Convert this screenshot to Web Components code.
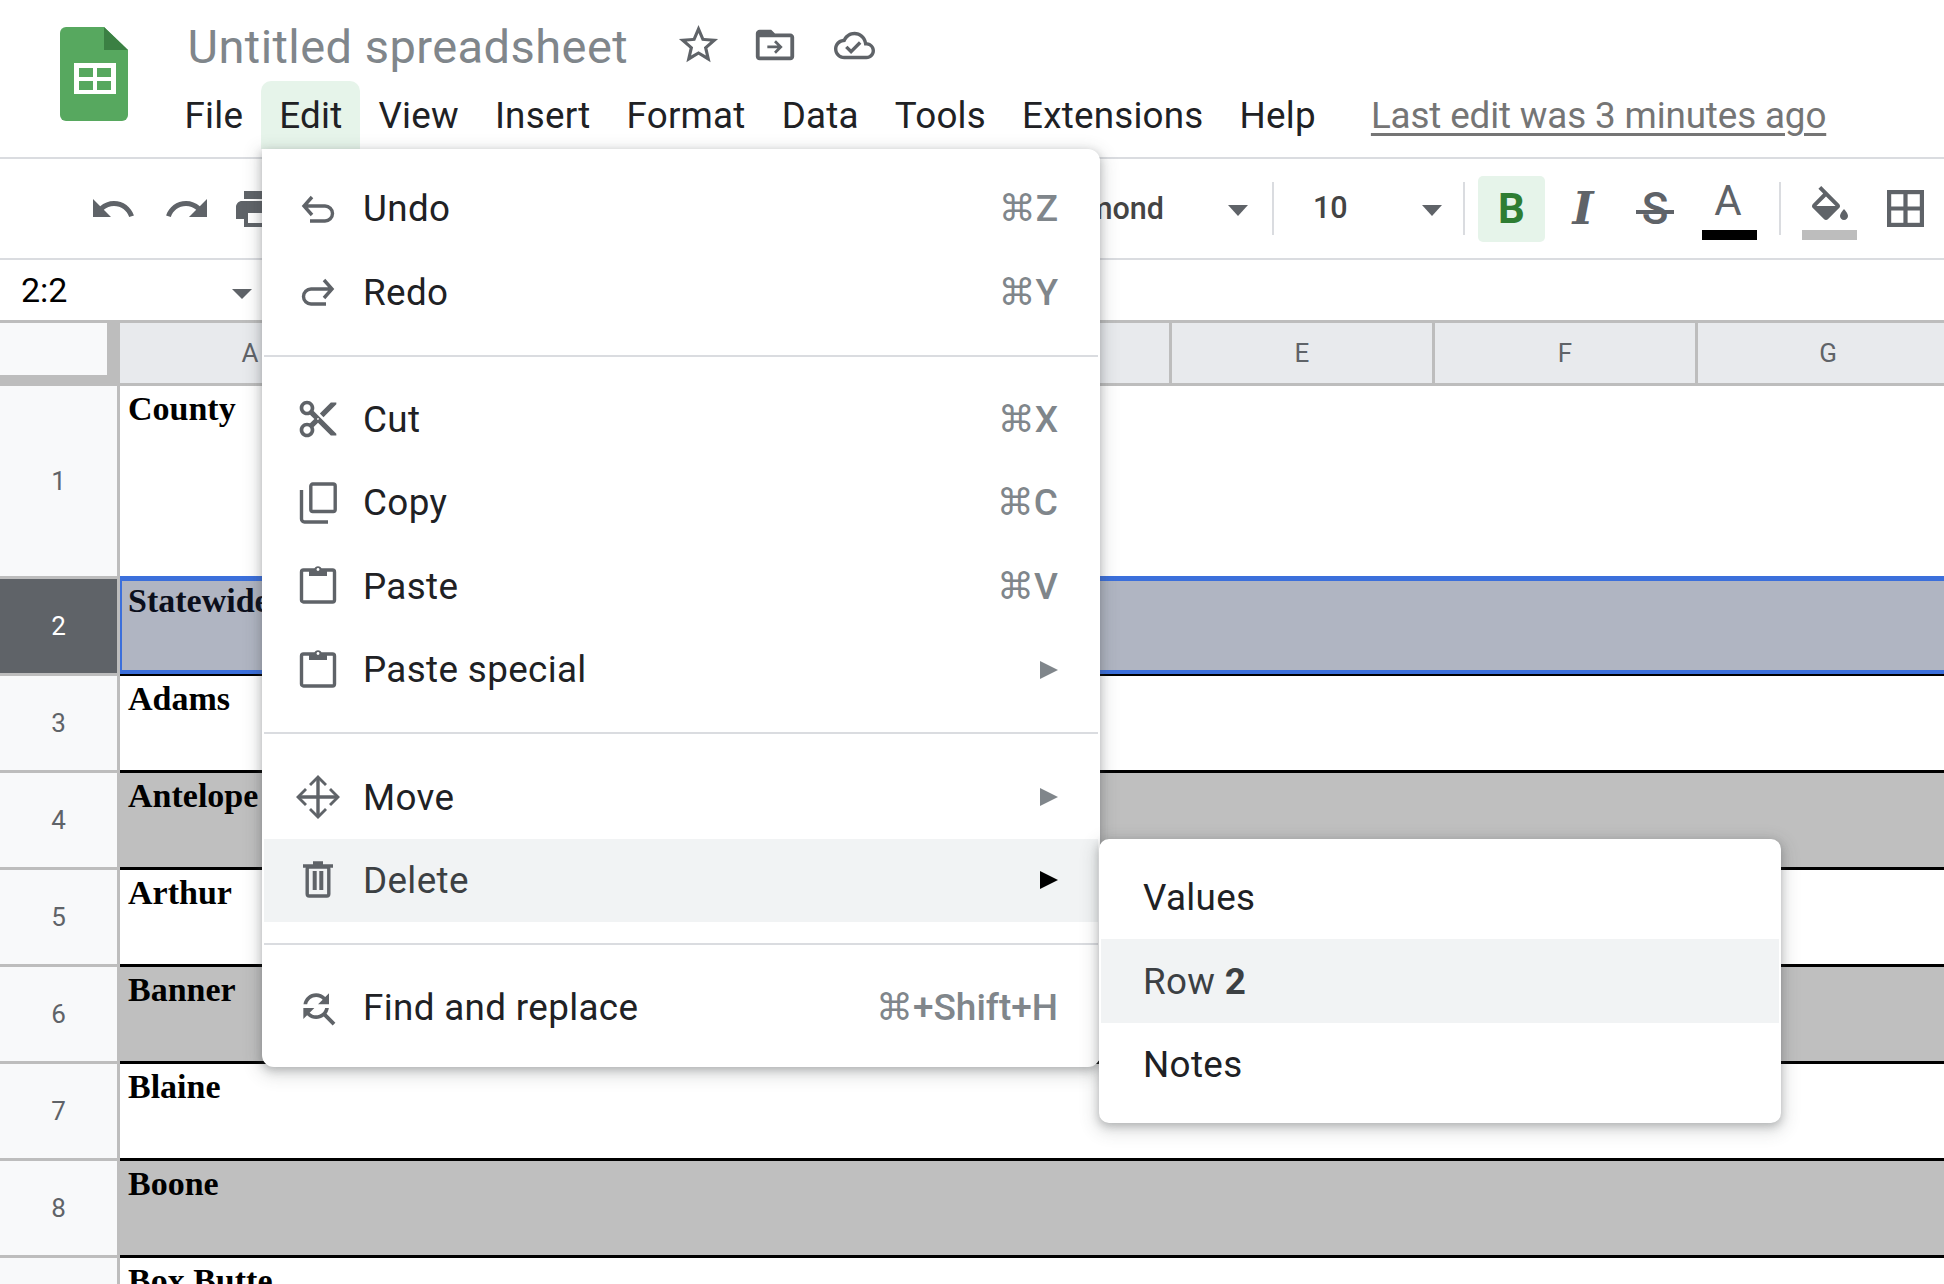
<!DOCTYPE html>
<html>
<head>
<meta charset="utf-8">
<title>Untitled spreadsheet</title>
<style>
  html, body { margin: 0; height: 100%; overflow: hidden; background: #fff; }
  body { font-family: Roboto, "DejaVu Sans", sans-serif; }
</style>
</head>
<body>
<sheet-app>
  <sheet-header></sheet-header>
  <sheet-toolbar></sheet-toolbar>
  <sheet-formula-bar></sheet-formula-bar>
  <sheet-columns></sheet-columns>
  <sheet-row num="1" tall>County</sheet-row>
  <sheet-row num="2" tone="selected">Statewide</sheet-row>
  <sheet-row num="3">Adams</sheet-row>
  <sheet-row num="4" tone="grey">Antelope</sheet-row>
  <sheet-row num="5">Arthur</sheet-row>
  <sheet-row num="6" tone="grey">Banner</sheet-row>
  <sheet-row num="7">Blaine</sheet-row>
  <sheet-row num="8" tone="grey">Boone</sheet-row>
  <sheet-row>Box Butte</sheet-row>

  <sheet-menu slot="overlay" style="left:262px;top:149px;width:838px">
    <sheet-menu-item icon="undo" shortcut="⌘Z">Undo</sheet-menu-item>
    <sheet-menu-item icon="redo" shortcut="⌘Y">Redo</sheet-menu-item>
    <sheet-menu-sep></sheet-menu-sep>
    <sheet-menu-item icon="cut" shortcut="⌘X">Cut</sheet-menu-item>
    <sheet-menu-item icon="copy" shortcut="⌘C">Copy</sheet-menu-item>
    <sheet-menu-item icon="paste" shortcut="⌘V">Paste</sheet-menu-item>
    <sheet-menu-item icon="paste" arrow>Paste special</sheet-menu-item>
    <sheet-menu-sep></sheet-menu-sep>
    <sheet-menu-item icon="move" arrow>Move</sheet-menu-item>
    <sheet-menu-item icon="trash" arrow active>Delete</sheet-menu-item>
    <sheet-menu-sep></sheet-menu-sep>
    <sheet-menu-item icon="find" shortcut="⌘+Shift+H">Find and replace</sheet-menu-item>
  </sheet-menu>

  <sheet-menu slot="overlay" sub style="left:1099px;top:839px;width:682px">
    <sheet-menu-item>Values</sheet-menu-item>
    <sheet-menu-item active>Row <b>2</b></sheet-menu-item>
    <sheet-menu-item>Notes</sheet-menu-item>
  </sheet-menu>
</sheet-app>

<script>
// Icon paths
const MATERIAL = {
  star: '<path fill="currentColor" d="M22 9.24l-7.19-.62L12 2 9.19 8.63 2 9.24l5.46 4.73L5.82 21 12 17.27 18.18 21l-1.63-7.03L22 9.24zM12 15.4l-3.76 2.27 1-4.28-3.32-2.88 4.38-.38L12 6.1l1.71 4.04 4.38.38-3.32 2.88 1 4.28L12 15.4z"/>',
  folder: '<path fill="currentColor" d="M20 6h-8l-2-2H4c-1.1 0-2 .9-2 2v12c0 1.1.9 2 2 2h16c1.1 0 2-.9 2-2V8c0-1.1-.9-2-2-2zm0 12H4V8h16v10z"/><path fill="currentColor" d="M12.5 9.5l3.5 3.5-3.5 3.5-1-1 1.75-1.75H8v-1.5h5.25L11.5 10.5z"/>',
  cloud: '<path fill="currentColor" d="M19.35 10.04C18.67 6.59 15.64 4 12 4 9.11 4 6.6 5.64 5.35 8.04 2.34 8.36 0 10.91 0 14c0 3.31 2.69 6 6 6h13c2.76 0 5-2.24 5-5 0-2.64-2.05-4.78-4.65-4.96zM19 18H6c-2.21 0-4-1.79-4-4 0-2.05 1.53-3.76 3.56-3.97l1.07-.11.5-.95C8.08 7.14 9.94 6 12 6c2.62 0 4.88 1.86 5.39 4.43l.3 1.5 1.53.11c1.56.1 2.78 1.41 2.78 2.96 0 1.65-1.35 3-3 3zm-9-3.82l-2.09-2.09L6.5 13.5 10 17l6.01-6.01-1.41-1.41z"/>',
  tbUndo: '<path fill="currentColor" d="M12.5 8c-2.65 0-5.05.99-6.9 2.6L2 7v9h9l-3.62-3.62c1.39-1.16 3.16-1.88 5.12-1.88 3.54 0 6.55 2.31 7.6 5.5l2.37-.78C21.08 11.03 17.15 8 12.5 8z"/>',
  tbRedo: '<path fill="currentColor" d="M18.4 10.6C16.55 8.99 14.15 8 11.5 8c-4.65 0-8.58 3.03-9.96 7.22L3.9 16c1.05-3.19 4.05-5.5 7.6-5.5 1.95 0 3.73.72 5.12 1.88L13 16h9V7l-3.6 3.6z"/>',
  print: '<path fill="currentColor" d="M19 8H5c-1.66 0-3 1.34-3 3v6h4v4h12v-4h4v-6c0-1.66-1.34-3-3-3zm-3 11H8v-5h8v5zm3-7c-.55 0-1-.45-1-1s.45-1 1-1 1 .45 1 1-.45 1-1 1zm-1-9H6v4h12V3z"/>',
  bucket: '<path fill="currentColor" d="M16.56 8.94L7.62 0 6.21 1.41l2.38 2.38-5.15 5.15c-.59.59-.59 1.54 0 2.12l5.5 5.5c.29.29.68.44 1.06.44s.77-.15 1.06-.44l5.5-5.5c.59-.58.59-1.53 0-2.12zM5.21 10L10 5.21 14.79 10H5.21zM19 11.5s-2 2.17-2 3.5c0 1.1.9 2 2 2s2-.9 2-2c0-1.33-2-3.5-2-3.5z"/>',
  cut: '<path fill="currentColor" d="M9.64 7.64c.23-.5.36-1.05.36-1.64 0-2.21-1.79-4-4-4S2 3.79 2 6s1.79 4 4 4c.59 0 1.14-.13 1.64-.36L10 12l-2.36 2.36C7.14 14.13 6.59 14 6 14c-2.21 0-4 1.79-4 4s1.79 4 4 4 4-1.79 4-4c0-.59-.13-1.14-.36-1.64L12 14l7 7h3v-1L9.64 7.64zM6 8c-1.1 0-2-.89-2-2s.9-2 2-2 2 .89 2 2-.9 2-2 2zm0 12c-1.1 0-2-.89-2-2s.9-2 2-2 2 .89 2 2-.9 2-2 2zm6-7.5c-.28 0-.5-.22-.5-.5s.22-.5.5-.5.5.22.5.5-.22.5-.5.5zM19 3l-6 6 2 2 7-7V3z"/>',
  find: '<path fill="currentColor" d="M11 6c1.38 0 2.63.56 3.54 1.46L12 10h6V4l-2.05 2.05C14.68 4.78 12.93 4 11 4c-3.53 0-6.43 2.61-6.92 6H6.1c.46-2.28 2.48-4 4.9-4zm5.64 9.14c.66-.9 1.12-1.97 1.28-3.14H15.9c-.46 2.28-2.48 4-4.9 4-1.38 0-2.63-.56-3.54-1.46L10 12H4v6l2.05-2.05C7.32 17.22 9.07 18 11 18c1.55 0 2.98-.51 4.14-1.36L20 21.49 21.49 20l-4.85-4.86z"/>'
};

// These are drawn by hand on a 44px box, so the strokes are in real pixels
const STROKED = {
  undo: '<path d="M16 10L8 19l8 9M8 19h21a7.5 7.5 0 0 1 0 15H14"/>',
  redo: '<path d="M28 10l8 9-8 9M36 19H15a7.5 7.5 0 0 0 0 15h15"/>',
  copy: '<rect x="14.8" y="3" width="24.4" height="27.5" rx="2"/><path d="M5.5 9v29a3 3 0 0 0 3 3H32"/>',
  paste: '<rect x="5.5" y="6" width="33" height="32" rx="2"/><path fill="currentColor" stroke="none" d="M13 5h5.4a3.7 3.7 0 0 1 7.2 0H31v7H13z"/><circle cx="22" cy="5.5" r="1.4" fill="#fff" stroke="none"/>',
  move: '<path d="M22 4v36M4 22h36"/><path fill="currentColor" stroke="none" d="M22 0l9 9-2 2-7-7-7 7-2-2zM22 44l9-9-2-2-7 7-7-7-2 2zM0 22l9 9 2-2-7-7 7-7-2-2zM44 22l-9 9-2-2 7-7-7-7 2-2z"/>',
  trash: '<rect x="11.2" y="9" width="21.6" height="29" rx="2"/><path d="M7 8h30M17 5h10"/><path fill="currentColor" stroke="none" d="M16.7 13h4v19h-4zM23.3 13h4v19h-4z"/>',
  borders: '<rect x="2.5" y="2.5" width="39" height="39" stroke-width="5"/><path stroke-width="5" d="M22 2v40M2 22h40"/>'
};

// Icon Web Component
class SheetIcon extends HTMLElement {
  constructor() {
    super();
    this.attachShadow({ mode: 'open' });
  }

  connectedCallback() {
    const name = this.getAttribute('name');
    const size = this.getAttribute('size') || 44;
    const body = MATERIAL[name]
      ? `<svg viewBox="0 0 24 24" width="${size}" height="${size}">${MATERIAL[name]}</svg>`
      : `<svg viewBox="0 0 44 44" width="${size}" height="${size}" fill="none" stroke="currentColor" stroke-width="3.4">${STROKED[name]}</svg>`;

    this.shadowRoot.innerHTML = `
      <style>
        :host { display: block; flex: none; color: #5f6368; line-height: 0; }
        svg { display: block; overflow: visible; }
      </style>
      ${body}
    `;
  }
}

// Page shell, the menus lie over the sheet
class SheetApp extends HTMLElement {
  constructor() {
    super();
    this.attachShadow({ mode: 'open' });
    this.shadowRoot.innerHTML = `
      <style>
        :host { display: block; position: relative; width: 1944px; height: 1284px; overflow: hidden; }
      </style>
      <slot></slot>
      <slot name="overlay"></slot>
    `;
  }
}

// Title and menu bar
class SheetHeader extends HTMLElement {
  constructor() {
    super();
    this.attachShadow({ mode: 'open' });
    const menus = ['File', 'Edit', 'View', 'Insert', 'Format', 'Data', 'Tools', 'Extensions', 'Help'];
    this.shadowRoot.innerHTML = `
      <style>
        :host { display: flex; height: 157px; box-sizing: border-box; padding-left: 60px; }
        .logo { margin-top: 27px; flex: none; display: block; }
        .main { margin-left: 38.5px; display: flex; flex-direction: column; }
        .title-row { display: flex; align-items: center; height: 81px; padding-left: 21px; }
        h1 { margin: 0; font: 400 47px Roboto, sans-serif; color: #80868b; white-space: nowrap; letter-spacing: 0.45px; position: relative; top: 6px; }
        .star { margin-left: 47px; margin-top: 8px; }
        .folder { margin-left: 30px; margin-top: 8px; }
        .cloud { margin-left: 36px; margin-top: 9px; }
        .menu-row { display: flex; align-items: flex-start; }
        .m { height: 68px; line-height: 70px; padding: 0 18px; font-size: 36.8px; letter-spacing: 0.23px; color: #202124; white-space: nowrap; }
        .m.open { background: #e6f4ea; border-radius: 10px 10px 0 0; }
        .last { margin-left: 37px; height: 68px; line-height: 70px; font-size: 36.8px; letter-spacing: -0.14px; color: #757575; white-space: nowrap; }
        .last span { text-decoration: underline; text-decoration-thickness: 3px; text-underline-offset: 5px; }
      </style>
      <svg class="logo" width="68" height="94" viewBox="0 0 68 94">
        <path fill="#57a85f" d="M6 0h38l24 23v65a6 6 0 0 1-6 6H6a6 6 0 0 1-6-6V6a6 6 0 0 1 6-6z"/>
        <path fill="#3b8043" d="M44 0l24 23H44z"/>
        <path fill="#fff" d="M14 36h42v31H14z"/>
        <path fill="#57a85f" d="M19 41h14v9H19zM37 41h14v9H37zM19 54h14v9H19zM37 54h14v9H37z"/>
      </svg>
      <div class="main">
        <div class="title-row">
          <h1>Untitled spreadsheet</h1>
          <sheet-icon class="star" name="star" size="47"></sheet-icon>
          <sheet-icon class="folder" name="folder" size="46"></sheet-icon>
          <sheet-icon class="cloud" name="cloud" size="41"></sheet-icon>
        </div>
        <div class="menu-row">
          ${menus.map(m => `<div class="m${m === 'Edit' ? ' open' : ''}">${m}</div>`).join('')}
          <div class="last"><span>Last edit was 3 minutes ago</span></div>
        </div>
      </div>
    `;
  }
}

// Toolbar, most of it is under the open menu
class SheetToolbar extends HTMLElement {
  constructor() {
    super();
    this.attachShadow({ mode: 'open' });
    this.shadowRoot.innerHTML = `
      <style>
        :host { display: flex; align-items: center; height: 103px; box-sizing: border-box; border-top: 2px solid #dadce0; border-bottom: 2px solid #dadce0; padding-left: 89px; color: #5f6368; }
        .name { width: 884px; flex: none; text-align: right; font: 500 30.5px Roboto, sans-serif; color: #444; overflow: hidden; white-space: nowrap; }
        .size { margin-left: 39px; width: 34px; flex: none; font: 500 30.5px Roboto, sans-serif; color: #444; position: relative; top: -1px; }
        .caret { flex: none; width: 0; height: 0; border-left: 10.5px solid transparent; border-right: 10.5px solid transparent; border-top: 11px solid #5f6368; margin-top: 3px; }
        .div { flex: none; width: 2px; height: 53px; background: #dadce0; }
        .bold { flex: none; margin-left: 13px; width: 67px; height: 66px; border-radius: 5px; background: #e6f4ea; display: flex; align-items: center; justify-content: center; font: 700 42px Roboto, sans-serif; color: #2e7d32; }
        .italic { flex: none; margin-left: 20px; width: 36px; text-align: center; font: italic 700 45px/48px "DejaVu Serif", serif; }
        .strike { flex: none; margin-left: 35px; width: 38px; text-align: center; font: 500 44px/48px Roboto, sans-serif; background: linear-gradient(#5f6368, #5f6368) center 25px / 100% 4px no-repeat; }
        .color { flex: none; margin-left: 28px; width: 55px; display: flex; flex-direction: column; align-items: center; padding-top: 2px; }
        .color .a { font: 400 42px/42px Roboto, sans-serif; height: 42px; margin: 0 3px 8px 0; }
        .bar { align-self: stretch; height: 10px; background: #000; }
        .fill { flex: none; margin-left: 21px; width: 55px; display: flex; flex-direction: column; align-items: center; padding-top: 8px; }
        .fill .bar { background: #bdbdbd; }
      </style>
      <sheet-icon name="tbUndo" size="48"></sheet-icon>
      <sheet-icon name="tbRedo" size="48" style="margin-left:26px"></sheet-icon>
      <sheet-icon name="print" size="48" style="margin-left:21px"></sheet-icon>
      <div class="name">mond</div>
      <div class="caret" style="margin-left:64px"></div>
      <div class="div" style="margin-left:24px"></div>
      <div class="size">10</div>
      <div class="caret" style="margin-left:75px"></div>
      <div class="div" style="margin-left:21px"></div>
      <div class="bold">B</div>
      <div class="italic">I</div>
      <div class="strike">S</div>
      <div class="color"><div class="a">A</div><div class="bar"></div></div>
      <div class="div" style="margin-left:22px"></div>
      <div class="fill"><sheet-icon name="bucket" size="48" style="height:44px"></sheet-icon><div class="bar"></div></div>
      <sheet-icon name="borders" size="37" style="margin-left:30px"></sheet-icon>
    `;
  }
}

// Name box
class SheetFormulaBar extends HTMLElement {
  constructor() {
    super();
    this.attachShadow({ mode: 'open' });
    this.shadowRoot.innerHTML = `
      <style>
        :host { display: flex; align-items: center; height: 63px; box-sizing: border-box; border-bottom: 3px solid #bdbdbd; padding-left: 21px; }
        .ref { width: 211px; font-size: 34px; color: #000; }
        .caret { width: 0; height: 0; border-left: 10px solid transparent; border-right: 10px solid transparent; border-top: 10px solid #5f6368; margin-top: 8px; }
      </style>
      <div class="ref">2:2</div>
      <div class="caret"></div>
    `;
  }
}

// Column letters
class SheetColumns extends HTMLElement {
  constructor() {
    super();
    this.attachShadow({ mode: 'open' });
    const cols = ['A', 'B', 'C', 'D', 'E', 'F', 'G'];
    this.shadowRoot.innerHTML = `
      <style>
        :host { display: grid; grid-template-columns: 120px repeat(7, 263px); height: 63px; box-sizing: border-box; border-bottom: 3px solid #bdbdbd; }
        .corner { background: #f8f9fa; border-right: 13px solid #bdbdbd; border-bottom: 8px solid #bdbdbd; box-sizing: border-box; }
        .col { background: #e8eaed; border-right: 3px solid #bdbdbd; box-sizing: border-box; display: flex; align-items: center; justify-content: center; font-size: 26px; color: #5f6368; }
      </style>
      <div class="corner"></div>
      ${cols.map(c => `<div class="col">${c}</div>`).join('')}
    `;
  }
}

// One row of the sheet
class SheetRow extends HTMLElement {
  constructor() {
    super();
    this.attachShadow({ mode: 'open' });
  }

  connectedCallback() {
    const num = this.getAttribute('num') || '';
    const tone = this.getAttribute('tone') || 'white';
    this.shadowRoot.innerHTML = `
      <style>
        :host { display: flex; height: ${this.hasAttribute('tall') ? 193 : 97}px; }
        .num { flex: none; width: 120px; box-sizing: border-box; border-right: 3px solid #bdbdbd; border-bottom: 3px solid #bdbdbd; background: #f8f9fa; color: #5f6368; font-size: 26px; display: flex; align-items: center; justify-content: center; }
        .cell { flex: 1; box-sizing: border-box; padding: 3px 0 0 8px; border-bottom: 3px solid #000; font: 700 34px/40px "Liberation Serif", serif; color: #000; white-space: nowrap; background: #fff; }
        .grey { background: #bfbfbf; }
        .tall { border-bottom: 0; }
        .selected { background: #b0b5c2; margin: -3px 0 2px; border: 5px solid #3b6fdb; border-bottom-width: 4px; border-left-width: 2px; border-right-width: 0; padding: 0 0 0 6px; box-shadow: 0 2px 0 #000; color: #0b0f1c; }
        .num.on { background: #5f6368; color: #fff; }
      </style>
      <div class="num${tone === 'selected' ? ' on' : ''}">${num}</div>
      <div class="cell ${tone}${this.hasAttribute('tall') ? ' tall' : ''}"><slot></slot></div>
    `;
  }
}

// Menu panel
class SheetMenu extends HTMLElement {
  constructor() {
    super();
    this.attachShadow({ mode: 'open' });
    this.shadowRoot.innerHTML = `
      <style>
        :host { display: block; position: absolute; box-sizing: border-box; background: #fff; border: 2px solid #fff; padding: 16px 0 15.4px; border-radius: 0 12px 12px 12px; box-shadow: 0 5px 16px 5px rgba(60,64,67,.15), 0 3px 8px rgba(60,64,67,.3); }
        :host([sub]) { border-radius: 10px; padding: 15px 0; z-index: 2; }
      </style>
      <slot></slot>
    `;
  }
}

class SheetMenuSep extends HTMLElement {
  constructor() {
    super();
    this.attachShadow({ mode: 'open' });
    this.shadowRoot.innerHTML = `
      <style>
        :host { display: block; height: 2px; margin: 21px 0; background: #dadce0; }
      </style>
    `;
  }
}

// Menu Item Web Component
class SheetMenuItem extends HTMLElement {
  constructor() {
    super();
    this.attachShadow({ mode: 'open' });
  }

  connectedCallback() {
    const icon = this.getAttribute('icon');
    const shortcut = this.getAttribute('shortcut');
    const active = this.hasAttribute('active');

    this.shadowRoot.innerHTML = `
      <style>
        :host { display: flex; align-items: center; height: 83.4px; box-sizing: border-box; padding: 0 40px 0 ${icon ? 32 : 42}px; font-size: 36.8px; letter-spacing: .35px; color: #202124; white-space: nowrap; }
        :host([active]) { background: #f1f3f4; color: #3c4043; }
        .label { flex: 1; margin-left: ${icon ? 23 : 0}px; }
        .short { font-weight: 500; font-size: 37px; letter-spacing: 0; color: #80868b; }
        .arrow { display: block; flex: none; }
      </style>
      ${icon ? `<sheet-icon name="${icon}"></sheet-icon>` : ''}
      <div class="label"><slot></slot></div>
      ${shortcut ? `<div class="short">${shortcut}</div>` : ''}
      ${this.hasAttribute('arrow') ? `<svg class="arrow" width="18" height="18" viewBox="0 0 18 18"><path fill="${active ? '#000' : '#80868b'}" d="M0 0l18 9-18 9z"/></svg>` : ''}
    `;
  }
}

customElements.define('sheet-icon', SheetIcon);
customElements.define('sheet-app', SheetApp);
customElements.define('sheet-header', SheetHeader);
customElements.define('sheet-toolbar', SheetToolbar);
customElements.define('sheet-formula-bar', SheetFormulaBar);
customElements.define('sheet-columns', SheetColumns);
customElements.define('sheet-row', SheetRow);
customElements.define('sheet-menu', SheetMenu);
customElements.define('sheet-menu-sep', SheetMenuSep);
customElements.define('sheet-menu-item', SheetMenuItem);
</script>
</body>
</html>
